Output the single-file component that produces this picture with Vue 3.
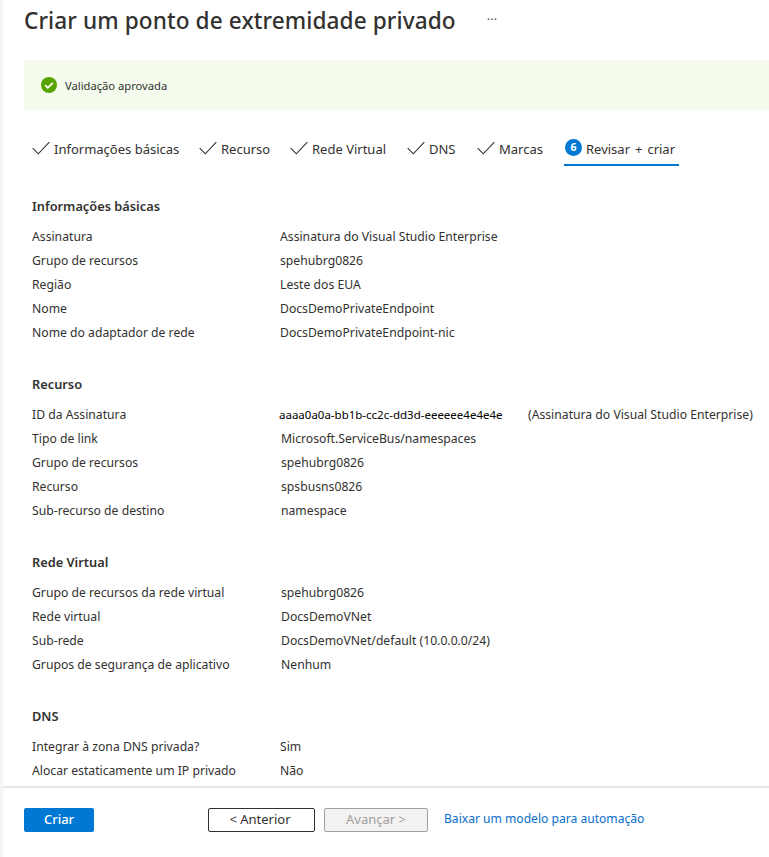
<script setup>
const tabs = [
  { label: 'Informações básicas', w: 167 },
  { label: 'Recurso', w: 91 },
  { label: 'Rede Virtual', w: 117 },
  { label: 'DNS', w: 70 },
  { label: 'Marcas', w: 87 }
]
const sections = [
  { title: 'Informações básicas', rows: [
    ['Assinatura', 'Assinatura do Visual Studio Enterprise'],
    ['Grupo de recursos', 'spehubrg0826'],
    ['Região', 'Leste dos EUA'],
    ['Nome', 'DocsDemoPrivateEndpoint'],
    ['Nome do adaptador de rede', 'DocsDemoPrivateEndpoint-nic']
  ]},
  { title: 'Recurso', nudge: true, rows: [
    ['ID da Assinatura', 'aaaa0a0a-bb1b-cc2c-dd3d-eeeeee4e4e4e', '(Assinatura do Visual Studio Enterprise)'],
    ['Tipo de link', 'Microsoft.ServiceBus/namespaces'],
    ['Grupo de recursos', 'spehubrg0826'],
    ['Recurso', 'spsbusns0826'],
    ['Sub-recurso de destino', 'namespace']
  ]},
  { title: 'Rede Virtual', nudge: true, rows: [
    ['Grupo de recursos da rede virtual', 'spehubrg0826'],
    ['Rede virtual', 'DocsDemoVNet'],
    ['Sub-rede', 'DocsDemoVNet/default (10.0.0.0/24)'],
    ['Grupos de segurança de aplicativo', 'Nenhum']
  ]},
  { title: 'DNS', rows: [
    ['Integrar à zona DNS privada?', 'Sim'],
    ['Alocar estaticamente um IP privado', 'Não']
  ]}
]
</script>

<template>
  <div class="page">
    <header class="head">
      <h1>Criar um ponto de extremidade privado</h1>
      <span class="more">···</span>
    </header>
    <div class="banner">
      <svg class="ok" width="16" height="16" viewBox="0 0 16 16">
        <circle cx="8" cy="8" r="8" fill="#57a300" />
        <path d="M4.2 8.2l2.6 2.6 5-5" fill="none" stroke="#fff" stroke-width="1.8" />
      </svg>
      <span>Validação aprovada</span>
    </div>
    <nav class="tabs">
      <div v-for="t in tabs" :key="t.label" class="tab" :style="{ width: t.w + 'px' }">
        <svg width="18" height="14" viewBox="0 0 18 14"><path d="M.7 7.2l5.6 5.6L17.3 1.2" fill="none" stroke="#323130" stroke-width="1.1" /></svg>
        <span>{{ t.label }}</span>
      </div>
      <div class="tab active">
        <span class="num">6</span>
        <span>Revisar + criar</span>
      </div>
    </nav>
    <main class="body">
      <section v-for="s in sections" :key="s.title" class="sec" :class="{ nudge: s.nudge }">
        <h2>{{ s.title }}</h2>
        <div v-for="r in s.rows" :key="r[0]" class="row">
          <span class="k">{{ r[0] }}</span>
          <span class="v" :class="{ id: r[2] }">{{ r[1] }}</span>
          <span v-if="r[2]" class="x">{{ r[2] }}</span>
        </div>
      </section>
    </main>
    <footer class="foot">
      <button class="btn primary">Criar</button>
      <button class="btn prev">&lt; Anterior</button>
      <button class="btn next">Avançar &gt;</button>
      <a class="link">Baixar um modelo para automação</a>
    </footer>
  </div>
</template>

<style>
html, body { margin: 0; background: #fff; }
</style>

<style scoped>
.page {
  width: 769px; height: 857px; box-sizing: border-box; overflow: hidden;
  border-left: 3px solid #f5f5f5;
  font-family: "Noto Sans", "Open Sans", sans-serif; font-size: 12.2px; color: #323130;
  display: flex; flex-direction: column;
}
.head { height: 60px; padding-left: 21px; display: flex; align-items: flex-start; flex: none; }
h1 { margin: 5px 0 0; font-size: 22.6px; line-height: 32px; font-weight: 500; color: #323130; letter-spacing: .1px; }
.more { margin: 9px 0 0 31px; font-size: 13px; color: #605e5c; line-height: 20px; }
.banner {
  height: 50px; margin-left: 21px; background: #f5fcee; flex: none;
  display: flex; align-items: center; padding-left: 17px; gap: 8px; font-size: 11.2px;
}
.tabs { display: flex; height: 62px; margin-left: 29px; padding-top: 27px; box-sizing: border-box; flex: none; font-size: 13px; }
.tab { display: flex; align-items: flex-start; gap: 4px; height: 29px; box-sizing: border-box; line-height: 24px; white-space: nowrap; color: #323130; }
.tab svg { margin-top: 4px; flex: none; }
.tab.active { border-bottom: 2px solid #0078d4; width: 115px; padding-left: 1px; gap: 4px; word-spacing: 1.6px; }
.num { width: 17px; height: 17px; border-radius: 50%; background: #0078d4; color: #fff; font-size: 10.5px; font-weight: 700; line-height: 17px; text-align: center; margin-top: 2px; }
.body { flex: 1; min-height: 0; overflow: hidden; padding-left: 29px; padding-top: 22px; }
.sec { margin-bottom: 27px; }
h2 { margin: 0 0 7px; font-size: 12.8px; line-height: 24px; font-weight: 600; color: #323130; }
.row { display: flex; height: 24px; line-height: 24px; white-space: nowrap; }
.k { width: 248px; flex: none; }
.nudge .v { margin-left: 1px; }
.nudge .id { margin-left: -1px; width: 249px; }
.id { color: #000; font-size: 11.5px; flex: none; }
.x { white-space: nowrap; }
.foot {
  flex: none; border-top: 2px solid #e6e6e6; display: flex; align-items: flex-start;
  padding: 20px 0 0 21px; height: 49px; background: #fff;
}
.btn { height: 24px; box-sizing: border-box; font: inherit; font-size: 13px; line-height: 20px; border-radius: 2px; padding: 0 0 2px; }
.primary { width: 70px; background: #0078d4; border: 0; color: #fff; font-weight: 500; margin-right: 114px; }
.prev { width: 107px; background: #fff; border: 1px solid #323130; color: #323130; margin-right: 9px; padding-right: 3px; }
.next { width: 104px; background: #f3f2f1; border: 1px solid #a19f9d; color: #a19f9d; margin-right: 16px; }
.link { color: #0a6ecb; line-height: 22px; font-size: 12.1px; }
</style>
